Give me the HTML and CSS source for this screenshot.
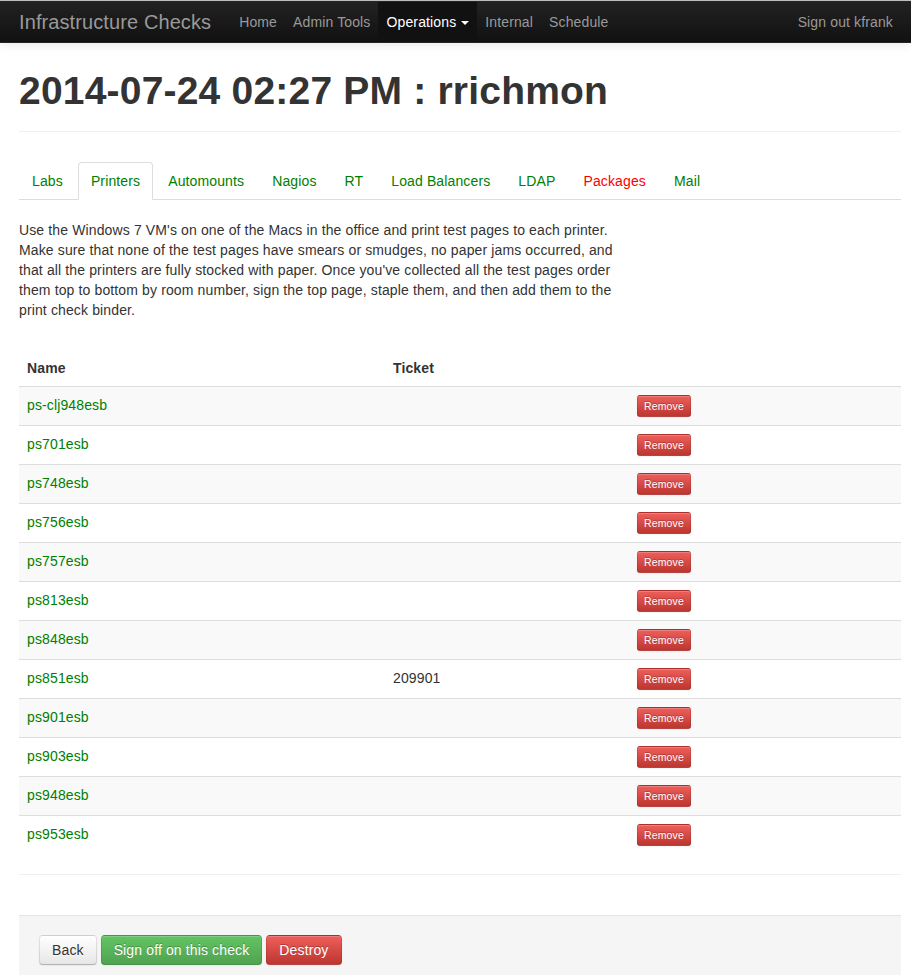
FILE: index.html
```html
<!DOCTYPE html>
<html>
<head>
<meta charset="utf-8">
<title>Infrastructure Checks</title>
<link rel="stylesheet" href="styles.css">
</head>
<body>
<div class="navbar">
  <div class="navbar-inner">
    <a class="brand" href="#">Infrastructure Checks</a>
    <ul class="nav">
      <li><a href="#">Home</a></li>
      <li><a href="#">Admin Tools</a></li>
      <li class="active"><a href="#">Operations <span class="caret"></span></a></li>
      <li><a href="#">Internal</a></li>
      <li><a href="#">Schedule</a></li>
    </ul>
    <ul class="nav nav-right">
      <li><a href="#">Sign out kfrank</a></li>
    </ul>
  </div>
</div>

<div class="container">
  <div class="page-header">
    <h1>2014-07-24 02:27 PM : rrichmon</h1>
  </div>

  <ul class="nav-tabs">
    <li><a href="#">Labs</a></li>
    <li class="active"><a href="#">Printers</a></li>
    <li><a href="#">Automounts</a></li>
    <li><a href="#">Nagios</a></li>
    <li><a href="#">RT</a></li>
    <li><a href="#">Load Balancers</a></li>
    <li><a href="#">LDAP</a></li>
    <li><a href="#" class="failed">Packages</a></li>
    <li><a href="#">Mail</a></li>
  </ul>

  <p class="desc">Use the Windows 7 VM's on one of the Macs in the office and print test pages to each printer. Make sure that none of the test pages have smears or smudges, no paper jams occurred, and that all the printers are fully stocked with paper. Once you've collected all the test pages order them top to bottom by room number, sign the top page, staple them, and then add them to the print check binder.</p>

  <table class="table">
    <thead>
      <tr><th class="col-name">Name</th><th class="col-ticket">Ticket</th><th></th></tr>
    </thead>
    <tbody>
      <tr><td><a href="#">ps-clj948esb</a></td><td></td><td><a class="btn btn-mini btn-danger" href="#">Remove</a></td></tr>
      <tr><td><a href="#">ps701esb</a></td><td></td><td><a class="btn btn-mini btn-danger" href="#">Remove</a></td></tr>
      <tr><td><a href="#">ps748esb</a></td><td></td><td><a class="btn btn-mini btn-danger" href="#">Remove</a></td></tr>
      <tr><td><a href="#">ps756esb</a></td><td></td><td><a class="btn btn-mini btn-danger" href="#">Remove</a></td></tr>
      <tr><td><a href="#">ps757esb</a></td><td></td><td><a class="btn btn-mini btn-danger" href="#">Remove</a></td></tr>
      <tr><td><a href="#">ps813esb</a></td><td></td><td><a class="btn btn-mini btn-danger" href="#">Remove</a></td></tr>
      <tr><td><a href="#">ps848esb</a></td><td></td><td><a class="btn btn-mini btn-danger" href="#">Remove</a></td></tr>
      <tr><td><a href="#">ps851esb</a></td><td>209901</td><td><a class="btn btn-mini btn-danger" href="#">Remove</a></td></tr>
      <tr><td><a href="#">ps901esb</a></td><td></td><td><a class="btn btn-mini btn-danger" href="#">Remove</a></td></tr>
      <tr><td><a href="#">ps903esb</a></td><td></td><td><a class="btn btn-mini btn-danger" href="#">Remove</a></td></tr>
      <tr><td><a href="#">ps948esb</a></td><td></td><td><a class="btn btn-mini btn-danger" href="#">Remove</a></td></tr>
      <tr><td><a href="#">ps953esb</a></td><td></td><td><a class="btn btn-mini btn-danger" href="#">Remove</a></td></tr>
    </tbody>
  </table>

  <hr class="sep">

  <div class="form-actions">
    <a class="btn" href="#">Back</a>
    <a class="btn btn-success" href="#">Sign off on this check</a>
    <a class="btn btn-danger" href="#">Destroy</a>
  </div>
</div>
</body>
</html>
```

FILE: styles.css
```css
* { box-sizing: border-box; }

html, body {
  margin: 0;
  padding: 0;
}

body {
  font-family: "Liberation Sans", Arial, Helvetica, sans-serif;
  font-size: 14px;
  line-height: 20px;
  letter-spacing: 0.13px;
  color: #333;
  background: #fff;
}

a {
  color: #008000;
  text-decoration: none;
}

/* Navbar */
.navbar {
  border-top: 1px solid #c4c4c4;
}

.navbar-inner {
  display: flex;
  align-items: stretch;
  min-height: 42px;
  padding: 0 10px 0 19px;
  background-color: #1b1b1b;
  background-image: linear-gradient(to bottom, #222222, #111111);
  border: 1px solid #252525;
  border-left: 0;
  border-right: 0;
  box-shadow: 0 1px 10px rgba(0, 0, 0, 0.1);
}

.brand {
  display: block;
  padding: 10px 20px 10px 0;
  font-size: 20px;
  font-weight: 200;
  line-height: 20px;
  letter-spacing: 0.1px;
  color: #999;
}

.nav {
  display: flex;
  list-style: none;
  margin: 0;
  padding: 0;
}

.nav-right {
  margin-left: auto;
}

.nav li a {
  display: flex;
  align-items: center;
  height: 100%;
  padding: 10px 8px;
  color: #999;
  font-size: 14px;
  line-height: 20px;
}

.nav li.active a {
  background-color: #111;
  color: #fff;
}

.caret {
  display: inline-block;
  width: 0;
  height: 0;
  margin-left: 5px;
  margin-top: 1px;
  border-top: 4px solid #fff;
  border-left: 4px solid transparent;
  border-right: 4px solid transparent;
}

/* Content */
.container {
  padding: 0 10px 0 19px;
}

.page-header {
  margin: 28px 0 30px;
  padding-bottom: 10px;
  border-bottom: 1px solid #eee;
}

.page-header h1 {
  margin: 0 0 10px;
  font-size: 39px;
  line-height: 40px;
  letter-spacing: 0.2px;
  font-weight: bold;
  color: #333;
}

.nav-tabs {
  display: flex;
  list-style: none;
  margin: 0 0 20px;
  padding: 0;
  border-bottom: 1px solid #ddd;
}

.nav-tabs li {
  margin-bottom: -1px;
}

.nav-tabs li a {
  display: block;
  margin-right: 2px;
  padding: 8px 12px;
  line-height: 20px;
  border: 1px solid transparent;
  border-radius: 4px 4px 0 0;
  color: #008000;
}

.nav-tabs li.active a {
  background: #fff;
  border-color: #ddd #ddd transparent;
}

.nav-tabs li a.failed {
  color: #ff0000;
}

.desc {
  width: 612px;
  margin: 0 0 30px;
}

.table {
  width: 100%;
  border-collapse: collapse;
  border-spacing: 0;
  margin: 0;
}

.table th,
.table td {
  padding: 8px;
  line-height: 20px;
  text-align: left;
  vertical-align: top;
}

.table td {
  border-top: 1px solid #ddd;
}

.table th {
  font-weight: bold;
  vertical-align: bottom;
}

.table .col-name { width: 366px; }
.table .col-ticket { width: 244px; }

.table tbody tr:nth-child(odd) td {
  background-color: #f9f9f9;
}

.table td .btn-mini {
  vertical-align: top;
}

.sep {
  margin: 20px 0 40px;
  border: 0;
  border-top: 1px solid #eee;
  height: 0;
}

/* Buttons */
.btn {
  display: inline-block;
  padding: 4px 12px;
  font-size: 14px;
  line-height: 20px;
  color: #333;
  text-align: center;
  vertical-align: middle;
  text-shadow: 0 1px 1px rgba(255, 255, 255, 0.75);
  background-color: #f5f5f5;
  background-image: linear-gradient(to bottom, #ffffff, #e6e6e6);
  border: 1px solid #ccc;
  border-color: rgba(0, 0, 0, 0.1) rgba(0, 0, 0, 0.1) rgba(0, 0, 0, 0.25);
  border-bottom-color: #b3b3b3;
  border-radius: 4px;
  box-shadow: inset 0 1px 0 rgba(255, 255, 255, 0.2), 0 1px 2px rgba(0, 0, 0, 0.05);
}

.btn-danger {
  color: #fff;
  text-shadow: 0 -1px 0 rgba(0, 0, 0, 0.25);
  background-color: #da4f49;
  background-image: linear-gradient(to bottom, #ee5f5b, #bd362f);
  border-color: rgba(0, 0, 0, 0.1) rgba(0, 0, 0, 0.1) rgba(0, 0, 0, 0.25);
}

.btn-success {
  color: #fff;
  text-shadow: 0 -1px 0 rgba(0, 0, 0, 0.25);
  background-color: #5bb75b;
  background-image: linear-gradient(to bottom, #62c462, #51a351);
  border-color: rgba(0, 0, 0, 0.1) rgba(0, 0, 0, 0.1) rgba(0, 0, 0, 0.25);
}

.btn-mini {
  padding: 0 6px;
  font-size: 10.5px;
  line-height: 20px;
  border-radius: 3px;
}

.form-actions {
  display: flex;
  gap: 4px;
  padding: 19px 20px 20px;
  background-color: #f5f5f5;
  border-top: 1px solid #e5e5e5;
}
```
